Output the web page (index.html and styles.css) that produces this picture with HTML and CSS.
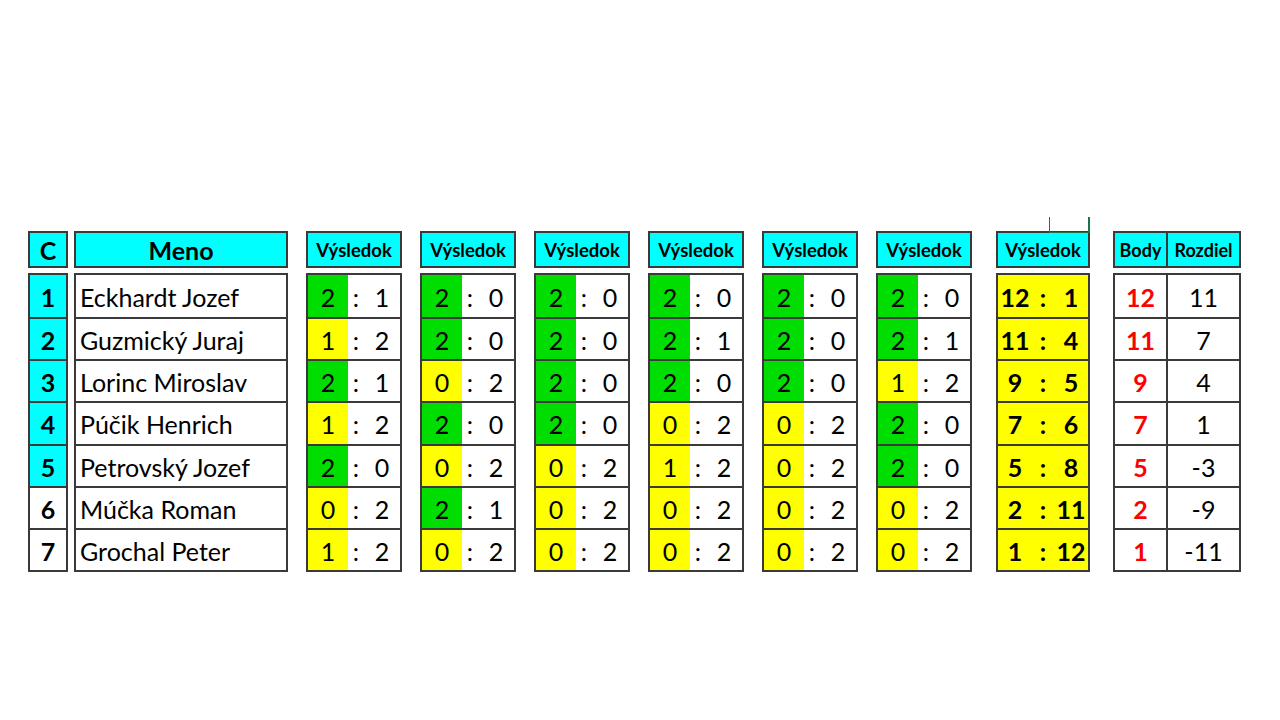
FILE: index.html
```html
<!DOCTYPE html>
<html lang="sk">
<head>
<meta charset="utf-8">
<title>Tabuľka</title>
<link rel="stylesheet" href="styles.css">
</head>
<body>
<div class="table">
  <div class="group g-c">
    <div class="hd hd-big">C</div>
    <div class="bd">
      <div class="row num cy">1</div>
      <div class="row num cy">2</div>
      <div class="row num cy">3</div>
      <div class="row num cy">4</div>
      <div class="row num cy">5</div>
      <div class="row num">6</div>
      <div class="row num">7</div>
    </div>
  </div>
  <div class="group g-name">
    <div class="hd hd-big">Meno</div>
    <div class="bd">
      <div class="row name">Eckhardt Jozef</div>
      <div class="row name">Guzmický Juraj</div>
      <div class="row name">Lorinc Miroslav</div>
      <div class="row name">Púčik Henrich</div>
      <div class="row name">Petrovský Jozef</div>
      <div class="row name">Múčka Roman</div>
      <div class="row name">Grochal Peter</div>
    </div>
  </div>

  <div class="group g-score first">
    <div class="hd">Výsledok</div>
    <div class="bd">
      <div class="row score"><span class="l gr">2</span><span class="c">:</span><span class="r">1</span></div>
      <div class="row score"><span class="l ye">1</span><span class="c">:</span><span class="r">2</span></div>
      <div class="row score"><span class="l gr">2</span><span class="c">:</span><span class="r">1</span></div>
      <div class="row score"><span class="l ye">1</span><span class="c">:</span><span class="r">2</span></div>
      <div class="row score"><span class="l gr">2</span><span class="c">:</span><span class="r">0</span></div>
      <div class="row score"><span class="l ye">0</span><span class="c">:</span><span class="r">2</span></div>
      <div class="row score"><span class="l ye">1</span><span class="c">:</span><span class="r">2</span></div>
    </div>
  </div>
  <div class="group g-score">
    <div class="hd">Výsledok</div>
    <div class="bd">
      <div class="row score"><span class="l gr">2</span><span class="c">:</span><span class="r">0</span></div>
      <div class="row score"><span class="l gr">2</span><span class="c">:</span><span class="r">0</span></div>
      <div class="row score"><span class="l ye">0</span><span class="c">:</span><span class="r">2</span></div>
      <div class="row score"><span class="l gr">2</span><span class="c">:</span><span class="r">0</span></div>
      <div class="row score"><span class="l ye">0</span><span class="c">:</span><span class="r">2</span></div>
      <div class="row score"><span class="l gr">2</span><span class="c">:</span><span class="r">1</span></div>
      <div class="row score"><span class="l ye">0</span><span class="c">:</span><span class="r">2</span></div>
    </div>
  </div>
  <div class="group g-score">
    <div class="hd">Výsledok</div>
    <div class="bd">
      <div class="row score"><span class="l gr">2</span><span class="c">:</span><span class="r">0</span></div>
      <div class="row score"><span class="l gr">2</span><span class="c">:</span><span class="r">0</span></div>
      <div class="row score"><span class="l gr">2</span><span class="c">:</span><span class="r">0</span></div>
      <div class="row score"><span class="l gr">2</span><span class="c">:</span><span class="r">0</span></div>
      <div class="row score"><span class="l ye">0</span><span class="c">:</span><span class="r">2</span></div>
      <div class="row score"><span class="l ye">0</span><span class="c">:</span><span class="r">2</span></div>
      <div class="row score"><span class="l ye">0</span><span class="c">:</span><span class="r">2</span></div>
    </div>
  </div>
  <div class="group g-score">
    <div class="hd">Výsledok</div>
    <div class="bd">
      <div class="row score"><span class="l gr">2</span><span class="c">:</span><span class="r">0</span></div>
      <div class="row score"><span class="l gr">2</span><span class="c">:</span><span class="r">1</span></div>
      <div class="row score"><span class="l gr">2</span><span class="c">:</span><span class="r">0</span></div>
      <div class="row score"><span class="l ye">0</span><span class="c">:</span><span class="r">2</span></div>
      <div class="row score"><span class="l ye">1</span><span class="c">:</span><span class="r">2</span></div>
      <div class="row score"><span class="l ye">0</span><span class="c">:</span><span class="r">2</span></div>
      <div class="row score"><span class="l ye">0</span><span class="c">:</span><span class="r">2</span></div>
    </div>
  </div>
  <div class="group g-score">
    <div class="hd">Výsledok</div>
    <div class="bd">
      <div class="row score"><span class="l gr">2</span><span class="c">:</span><span class="r">0</span></div>
      <div class="row score"><span class="l gr">2</span><span class="c">:</span><span class="r">0</span></div>
      <div class="row score"><span class="l gr">2</span><span class="c">:</span><span class="r">0</span></div>
      <div class="row score"><span class="l ye">0</span><span class="c">:</span><span class="r">2</span></div>
      <div class="row score"><span class="l ye">0</span><span class="c">:</span><span class="r">2</span></div>
      <div class="row score"><span class="l ye">0</span><span class="c">:</span><span class="r">2</span></div>
      <div class="row score"><span class="l ye">0</span><span class="c">:</span><span class="r">2</span></div>
    </div>
  </div>
  <div class="group g-score">
    <div class="hd">Výsledok</div>
    <div class="bd">
      <div class="row score"><span class="l gr">2</span><span class="c">:</span><span class="r">0</span></div>
      <div class="row score"><span class="l gr">2</span><span class="c">:</span><span class="r">1</span></div>
      <div class="row score"><span class="l ye">1</span><span class="c">:</span><span class="r">2</span></div>
      <div class="row score"><span class="l gr">2</span><span class="c">:</span><span class="r">0</span></div>
      <div class="row score"><span class="l gr">2</span><span class="c">:</span><span class="r">0</span></div>
      <div class="row score"><span class="l ye">0</span><span class="c">:</span><span class="r">2</span></div>
      <div class="row score"><span class="l ye">0</span><span class="c">:</span><span class="r">2</span></div>
    </div>
  </div>

  <div class="group g-total">
    <div class="sel"></div>
    <div class="hd">Výsledok</div>
    <div class="bd ye">
      <div class="row total"><span class="l">12</span><span class="c">:</span><span class="r">1</span></div>
      <div class="row total"><span class="l">11</span><span class="c">:</span><span class="r">4</span></div>
      <div class="row total"><span class="l">9</span><span class="c">:</span><span class="r">5</span></div>
      <div class="row total"><span class="l">7</span><span class="c">:</span><span class="r">6</span></div>
      <div class="row total"><span class="l">5</span><span class="c">:</span><span class="r">8</span></div>
      <div class="row total"><span class="l">2</span><span class="c">:</span><span class="r">11</span></div>
      <div class="row total"><span class="l">1</span><span class="c">:</span><span class="r">12</span></div>
    </div>
  </div>

  <div class="group g-pts">
    <div class="hd split"><span class="p1">Body</span><span class="p2">Rozdiel</span></div>
    <div class="bd">
      <div class="row pts"><span class="p1">12</span><span class="p2">11</span></div>
      <div class="row pts"><span class="p1">11</span><span class="p2">7</span></div>
      <div class="row pts"><span class="p1">9</span><span class="p2">4</span></div>
      <div class="row pts"><span class="p1">7</span><span class="p2">1</span></div>
      <div class="row pts"><span class="p1">5</span><span class="p2">-3</span></div>
      <div class="row pts"><span class="p1">2</span><span class="p2">-9</span></div>
      <div class="row pts"><span class="p1">1</span><span class="p2">-11</span></div>
    </div>
  </div>
</div>
</body>
</html>
```

FILE: styles.css
```css
html, body {
  margin: 0;
  padding: 0;
  background: #ffffff;
}
body {
  width: 1280px;
  height: 720px;
  overflow: hidden;
  font-family: Lato, "Liberation Sans", sans-serif;
  color: #000;
}
.table {
  display: flex;
  align-items: flex-start;
  padding-top: 231px;
  padding-left: 28px;
}
.group {
  display: flex;
  flex-direction: column;
  gap: 5px;
  position: relative;
}
.g-c { width: 40px; }
.g-name { width: 214px; margin-left: 6px; }
.g-score { width: 96px; margin-left: 18px; }
.g-score.first { margin-left: 18px; }
.g-total { width: 94px; margin-left: 24px; }
.g-pts { width: 128px; margin-left: 23px; }

.hd {
  box-sizing: border-box;
  height: 37px;
  border: 2px solid #3a3a3a;
  background: #00ffff;
  display: flex;
  align-items: center;
  justify-content: center;
  font-weight: 700;
  font-size: 18.5px;
  padding-top: 1px;
}
.hd-big { font-size: 25px; }
.hd.split { padding: 0; align-items: stretch; font-size: 18px; }
.hd.split .p1, .hd.split .p2 {
  display: flex;
  align-items: center;
  justify-content: center;
  padding-top: 1px;
}
.p1 { width: 51px; flex: none; }
.p2 { flex: 1; border-left: 2px solid #3a3a3a; }

.bd {
  box-sizing: border-box;
  height: 299px;
  border: 2px solid #3a3a3a;
  display: grid;
  grid-template-rows: repeat(7, 1fr);
  background: #fff;
}
.bd.ye { background: #ffff00; }
.row {
  border-top: 2px solid #3a3a3a;
  display: flex;
  align-items: stretch;
  font-size: 25px;
  line-height: 1;
}
.row:first-child { border-top: none; }
.row > span {
  display: flex;
  align-items: center;
  justify-content: center;
  padding-top: 3px;
}
.num {
  justify-content: center;
  align-items: center;
  font-weight: 700;
  padding-top: 3px;
}
.cy { background: #00ffff; }
.name {
  align-items: center;
  padding-left: 4px;
  padding-top: 3px;
}
.score .l { width: 40px; flex: none; }
.score .c { width: 16px; flex: none; }
.score .r { flex: 1; }
.gr { background: #00dd00; }
.ye { background: #ffff00; }

.total { font-weight: 700; }
.total .l { width: 34px; flex: none; }
.total .c { width: 22px; flex: none; }
.total .r { flex: 1; }

.pts .p1 { color: #ff0000; font-weight: 700; }

.sel {
  position: absolute;
  left: 53px;
  top: -14px;
  width: 41px;
  height: 16px;
  border-left: 1px solid #217346;
  border-right: 2px solid #217346;
  border-bottom: 1px solid #217346;
  box-sizing: border-box;
  z-index: 2;
}
```
